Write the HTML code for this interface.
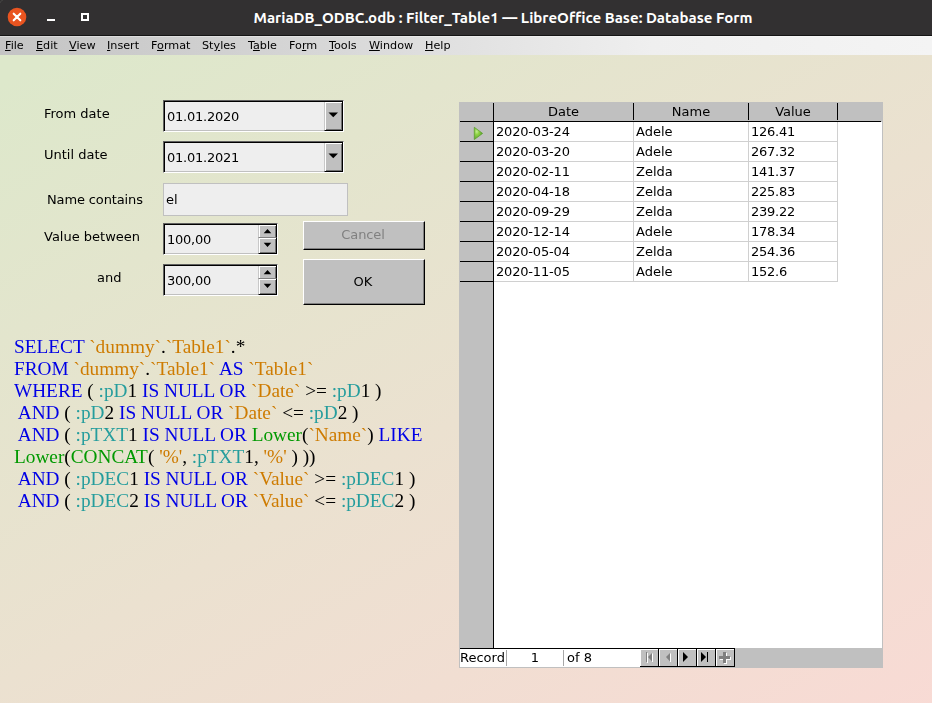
<!DOCTYPE html>
<html><head><meta charset="utf-8"><title>MariaDB_ODBC.odb : Filter_Table1 — LibreOffice Base: Database Form</title>
<style>
html,body{margin:0;padding:0;}
body{width:932px;height:703px;overflow:hidden;position:relative;font-family:"DejaVu Sans","Liberation Sans",sans-serif;font-size:13px;color:#000;background:#e8e4d0;}
.abs{position:absolute;}
#bg{left:0;top:55px;width:932px;height:648px;overflow:hidden;}
#bg i{position:absolute;left:0;top:0;width:932px;height:944px;background:linear-gradient(150deg,#dde8cb 0%,#dde8cb 2%,#ffd7d7 100%);}
#title{left:0;top:0;width:932px;height:36px;background:#323031;border-bottom:1px solid #151515;box-sizing:border-box;}
#menu{left:0;top:36px;width:932px;height:19px;box-shadow:inset 0 1px 0 rgba(255,255,255,0.35);background:linear-gradient(90deg,#c4c4c4 0%,#d4d4d4 30%,#efefef 70%,#f4f4f4 100%);white-space:nowrap;}
#menu span{position:absolute;top:2px;line-height:16px;font-size:11.2px;}
#menu u{text-decoration:underline;}
.lbl,.txt,#sql,#menu span{will-change:transform;}
.lbl{position:absolute;white-space:nowrap;line-height:16px;margin-top:1px;}
.inp{position:absolute;background:#eeeeee;box-sizing:border-box;}
.sunk{border-top:1px solid #606060;border-left:1px solid #606060;border-right:1px solid #fff;border-bottom:1px solid #fff;box-shadow:inset 1px 1px 0 #000, inset -1px -1px 0 #c0c0c0;}
.flat{border:1px solid #c0c0c0;}
.txt{position:absolute;white-space:nowrap;line-height:16px;margin-top:1px;}
.sb.up{border-bottom:1px solid #808080;box-shadow:inset 1px 1px 0 #fff, inset -1px 0 0 #707070;}
.num2{letter-spacing:-0.18px;}
.num{letter-spacing:-0.24px;}
.btn{position:absolute;background:#c0c0c0;box-sizing:border-box;border-top:1px solid #fff;border-left:1px solid #fff;border-right:1px solid #000;border-bottom:1px solid #000;box-shadow:inset -1px -1px 0 #808080;}
.sb{position:absolute;background:#c0c0c0;box-sizing:border-box;border-left:1px solid #c8c8c8;border-right:1px solid #000;border-bottom:1px solid #000;box-shadow:inset 1px 1px 0 #fff, inset -1px -1px 0 #707070;}
#sql{left:14px;top:336px;font-family:"Liberation Serif",serif;font-size:19.3px;line-height:22px;white-space:pre;}
.k{color:#0000e6}.i{color:#ce7b00}.p{color:#259d9d}.f{color:#009900}.s{color:#ce7b00}.q{color:#ce7b00}
</style></head><body>
<div id="bg" class="abs"><i></i></div>
<div id="title" class="abs">
<svg width="932" height="36" style="position:absolute;left:0;top:0">
<circle cx="17" cy="17" r="9.3" fill="#e95420"/>
<path d="M13.7 13.7 L20.3 20.3 M20.3 13.7 L13.7 20.3" stroke="#fff" stroke-width="2.1" stroke-linecap="round"/>
<rect x="47" y="19" width="8" height="2" fill="#fff"/>
<path d="M0 3 Q0.6 0.6 3 0" stroke="#454443" stroke-width="1" fill="none"/>
<rect x="82" y="14" width="6" height="6" fill="none" stroke="#fff" stroke-width="2"/>
<text x="503" y="23" text-anchor="middle" font-family="Ubuntu, 'Liberation Sans', 'DejaVu Sans', sans-serif" font-weight="bold" font-size="14.5" fill="#fff" textLength="499" lengthAdjust="spacingAndGlyphs">MariaDB_ODBC.odb : Filter_Table1 — LibreOffice Base: Database Form</text>
</svg>
</div>
<div id="menu" class="abs">
<span style="left:5px"><u>F</u>ile</span>
<span style="left:36px"><u>E</u>dit</span>
<span style="left:69px"><u>V</u>iew</span>
<span style="left:107px"><u>I</u>nsert</span>
<span style="left:151px">F<u>o</u>rmat</span>
<span style="left:202px">St<u>y</u>les</span>
<span style="left:248px">T<u>a</u>ble</span>
<span style="left:289px">Fo<u>r</u>m</span>
<span style="left:329px"><u>T</u>ools</span>
<span style="left:369px"><u>W</u>indow</span>
<span style="left:425px"><u>H</u>elp</span>
</div>

<div class="lbl" style="left:44px;top:105px">From date</div>
<div class="lbl" style="left:44px;top:146px">Until date</div>
<div class="lbl" style="left:47px;top:191px;letter-spacing:-0.13px">Name contains</div>
<div class="lbl" style="left:44px;top:228px">Value between</div>
<div class="lbl" style="left:97px;top:269px">and</div>

<div class="inp sunk" style="left:163px;top:100px;width:181px;height:32px"></div>
<div class="txt" style="left:167px;top:108px" ><span class="num">01.01.2020</span></div>
<div class="inp sunk" style="left:163px;top:141px;width:181px;height:32px"></div>
<div class="txt" style="left:167px;top:149px" ><span class="num">01.01.2021</span></div>
<div class="inp flat" style="left:163px;top:183px;width:185px;height:33px"></div>
<div class="txt" style="left:166px;top:191px">el</div>
<div class="inp sunk" style="left:163px;top:223px;width:115px;height:32px"></div>
<div class="txt" style="left:167px;top:231px" ><span class="num">100,00</span></div>
<div class="inp sunk" style="left:163px;top:264px;width:115px;height:32px"></div>
<div class="txt" style="left:167px;top:272px" ><span class="num">300,00</span></div>

<div class="btn" style="left:303px;top:221px;width:122px;height:29px"></div>
<div class="txt" style="left:303px;top:226px;width:120px;text-align:center;color:#808080;letter-spacing:-0.13px">Cancel</div>
<div class="btn" style="left:303px;top:259px;width:122px;height:46px"></div>
<div class="txt" style="left:303px;top:273px;width:120px;text-align:center">OK</div>


<div class="sb" style="left:324px;top:102px;width:19px;height:29px"></div>
<svg class="abs" style="left:324px;top:102px" width="19" height="29"><path d="M4.5 10.5 L14 10.5 L9.25 15.2Z" fill="#000"/></svg>
<div class="sb" style="left:324px;top:143px;width:19px;height:29px"></div>
<svg class="abs" style="left:324px;top:143px" width="19" height="29"><path d="M4.5 10.5 L14 10.5 L9.25 15.2Z" fill="#000"/></svg>
<div class="sb up" style="left:258px;top:225px;width:19px;height:13px"></div>
<div class="sb" style="left:258px;top:238px;width:19px;height:16px"></div>
<svg class="abs" style="left:258px;top:225px" width="19" height="29"><path d="M5.7 8.2 L13.3 8.2 L9.5 4Z M5.7 17.8 L13.3 17.8 L9.5 22Z" fill="#000"/></svg>
<div class="sb up" style="left:258px;top:266px;width:19px;height:13px"></div>
<div class="sb" style="left:258px;top:279px;width:19px;height:16px"></div>
<svg class="abs" style="left:258px;top:266px" width="19" height="29"><path d="M5.7 8.2 L13.3 8.2 L9.5 4Z M5.7 17.8 L13.3 17.8 L9.5 22Z" fill="#000"/></svg>
<div id="sql" class="abs"><span class="k">SELECT</span> <span class="i">`dummy`</span>.<span class="i">`Table1`</span>.*
<span class="k">FROM</span> <span class="i">`dummy`</span>.<span class="i">`Table1`</span> <span class="k">AS</span> <span class="i">`Table1`</span>
<span class="k">WHERE</span> ( <span class="p">:pD</span>1 <span class="k">IS NULL OR</span> <span class="i">`Date`</span> &gt;= <span class="p">:pD</span>1 )
 <span class="k">AND</span> ( <span class="p">:pD</span>2 <span class="k">IS NULL OR</span> <span class="i">`Date`</span> &lt;= <span class="p">:pD</span>2 )
 <span class="k">AND</span> ( <span class="p">:pTXT</span>1 <span class="k">IS NULL OR</span> <span class="f">Lower</span>(<span class="i">`Name`</span>) <span class="k">LIKE</span>
<span class="f">Lower</span>(<span class="f">CONCAT</span>( <span class="q">'</span><span class="s">%</span><span class="q">'</span>, <span class="p">:pTXT</span>1, <span class="q">'</span><span class="s">%</span><span class="q">'</span> ) ))
 <span class="k">AND</span> ( <span class="p">:pDEC</span>1 <span class="k">IS NULL OR</span> <span class="i">`Value`</span> &gt;= <span class="p">:pDEC</span>1 )
 <span class="k">AND</span> ( <span class="p">:pDEC</span>2 <span class="k">IS NULL OR</span> <span class="i">`Value`</span> &lt;= <span class="p">:pDEC</span>2 )</div>


<div id="grid" class="abs" style="left:459px;top:102px;width:424px;height:566px;background:#c0c0c0"></div>
<div class="abs" style="left:494px;top:122px;width:388px;height:526px;background:#fff"></div>
<div class="abs" style="left:460px;top:649px;width:180px;height:18px;background:#fff"></div>
<!-- black lines -->
<div class="abs" style="left:493px;top:103px;width:1px;height:545px;background:#000"></div>
<div class="abs" style="left:460px;top:121px;width:421px;height:1px;background:#000"></div>
<div class="abs" style="left:460px;top:648px;width:275px;height:1px;background:#000"></div>
<div class="abs" style="left:633px;top:103px;width:1px;height:17px;background:#000"></div>
<div class="abs" style="left:748px;top:103px;width:1px;height:17px;background:#000"></div>
<div class="abs" style="left:837px;top:103px;width:1px;height:17px;background:#000"></div>
<div class="abs" style="left:460px;top:141px;width:33px;height:1px;background:#000"></div>
<div class="abs" style="left:494px;top:141px;width:344px;height:1px;background:#d0d0d0"></div>
<div class="txt num2" style="left:496px;top:123px">2020-03-24</div><div class="txt" style="left:636px;top:123px">Adele</div><div class="txt num" style="left:751px;top:123px">126.41</div>
<div class="abs" style="left:460px;top:161px;width:33px;height:1px;background:#000"></div>
<div class="abs" style="left:494px;top:161px;width:344px;height:1px;background:#d0d0d0"></div>
<div class="txt num2" style="left:496px;top:143px">2020-03-20</div><div class="txt" style="left:636px;top:143px">Adele</div><div class="txt num" style="left:751px;top:143px">267.32</div>
<div class="abs" style="left:460px;top:181px;width:33px;height:1px;background:#000"></div>
<div class="abs" style="left:494px;top:181px;width:344px;height:1px;background:#d0d0d0"></div>
<div class="txt num2" style="left:496px;top:163px">2020-02-11</div><div class="txt" style="left:636px;top:163px">Zelda</div><div class="txt num" style="left:751px;top:163px">141.37</div>
<div class="abs" style="left:460px;top:201px;width:33px;height:1px;background:#000"></div>
<div class="abs" style="left:494px;top:201px;width:344px;height:1px;background:#d0d0d0"></div>
<div class="txt num2" style="left:496px;top:183px">2020-04-18</div><div class="txt" style="left:636px;top:183px">Zelda</div><div class="txt num" style="left:751px;top:183px">225.83</div>
<div class="abs" style="left:460px;top:221px;width:33px;height:1px;background:#000"></div>
<div class="abs" style="left:494px;top:221px;width:344px;height:1px;background:#d0d0d0"></div>
<div class="txt num2" style="left:496px;top:203px">2020-09-29</div><div class="txt" style="left:636px;top:203px">Zelda</div><div class="txt num" style="left:751px;top:203px">239.22</div>
<div class="abs" style="left:460px;top:241px;width:33px;height:1px;background:#000"></div>
<div class="abs" style="left:494px;top:241px;width:344px;height:1px;background:#d0d0d0"></div>
<div class="txt num2" style="left:496px;top:223px">2020-12-14</div><div class="txt" style="left:636px;top:223px">Adele</div><div class="txt num" style="left:751px;top:223px">178.34</div>
<div class="abs" style="left:460px;top:261px;width:33px;height:1px;background:#000"></div>
<div class="abs" style="left:494px;top:261px;width:344px;height:1px;background:#d0d0d0"></div>
<div class="txt num2" style="left:496px;top:243px">2020-05-04</div><div class="txt" style="left:636px;top:243px">Zelda</div><div class="txt num" style="left:751px;top:243px">254.36</div>
<div class="abs" style="left:460px;top:281px;width:33px;height:1px;background:#000"></div>
<div class="abs" style="left:494px;top:281px;width:344px;height:1px;background:#d0d0d0"></div>
<div class="txt num2" style="left:496px;top:263px">2020-11-05</div><div class="txt" style="left:636px;top:263px">Adele</div><div class="txt num" style="left:751px;top:263px">152.6</div>
<div class="abs" style="left:633px;top:122px;width:1px;height:160px;background:#d0d0d0"></div>
<div class="abs" style="left:748px;top:122px;width:1px;height:160px;background:#d0d0d0"></div>
<div class="abs" style="left:837px;top:122px;width:1px;height:160px;background:#d0d0d0"></div>

<div class="txt hd" style="left:494px;top:103px;width:139px;text-align:center">Date</div>
<div class="txt hd" style="left:634px;top:103px;width:114px;text-align:center">Name</div>
<div class="txt hd" style="left:749px;top:103px;width:88px;text-align:center">Value</div>
<svg class="abs" style="left:470px;top:124px" width="16" height="18"><defs><radialGradient id="tg" cx="0.3" cy="0.35" r="0.7"><stop offset="0" stop-color="#c4ee96"/><stop offset="0.35" stop-color="#8fd444"/><stop offset="1" stop-color="#5aa02a"/></radialGradient></defs><path d="M4.3 3.3 L12.6 9.4 L4.3 15.5 Z" fill="url(#tg)" stroke="#5c9e30" stroke-width="0.8" stroke-linejoin="round"/></svg>
<div class="txt" style="left:460px;top:649px">Record</div>
<div class="abs" style="left:506px;top:650px;width:1px;height:16px;background:#a8a8a8"></div>
<div class="txt" style="left:507px;top:649px;width:56px;text-align:center">1</div>
<div class="abs" style="left:563px;top:650px;width:1px;height:16px;background:#a8a8a8"></div>
<div class="txt" style="left:567px;top:649px">of 8</div>
<svg class="abs" style="left:640px;top:649px" width="96" height="19" shape-rendering="crispEdges">
<g id="nbs">
<rect x="0" y="0" width="95" height="18" fill="#c0c0c0"/>
<path d="M0 0.5H95 M0.5 0V18 M19.5 0V18 M38.5 0V18 M57.5 0V18 M76.5 0V18" stroke="#fff" stroke-width="1" fill="none"/>
<path d="M0 17.5H95 M18.5 0V18 M37.5 0V18 M56.5 0V18 M75.5 0V18 M94.5 0V18" stroke="#000" stroke-width="1" fill="none"/>
</g>
<g shape-rendering="geometricPrecision">
<rect x="6" y="3" width="1" height="10" fill="#808080"/><rect x="7" y="4" width="1" height="10" fill="#fff"/>
<path d="M12 4 L8 8 L12 12.5Z" fill="#808080"/><rect x="12" y="4.5" width="1" height="8.5" fill="#fff"/>
<path d="M30 4 L26 8 L30 12.5Z" fill="#808080"/><rect x="30" y="4.5" width="1" height="8.5" fill="#fff"/>
<path d="M43 3 L48 8 L43 13Z" fill="#000"/>
<path d="M61 3 L66 8 L61 13Z" fill="#000"/><rect x="67" y="3" width="1" height="10" fill="#000"/>
<g shape-rendering="crispEdges"><path d="M80 8h11v3h-11z M84 4h3v11h-3z" fill="#fff"/>
<path d="M79 7h11v3h-11z M83 3h3v11h-3z" fill="#808080"/></g>
</g>
</svg>
</body></html>
